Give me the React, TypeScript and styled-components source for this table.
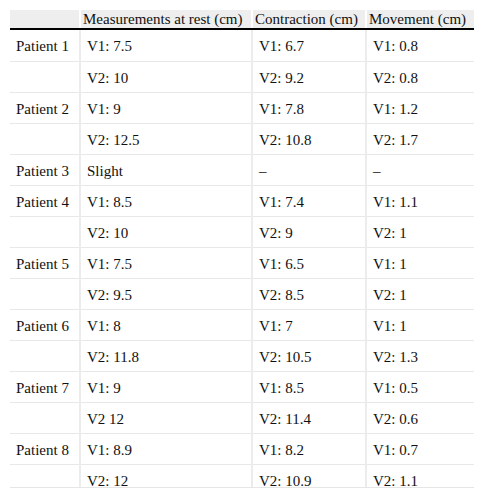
import { createGlobalStyle, styled } from 'styled-components';

type Row = [string, string, string, string];

const rows: Row[] = [
  ['Patient 1', 'V1: 7.5', 'V1: 6.7', 'V1: 0.8'],
  ['', 'V2: 10', 'V2: 9.2', 'V2: 0.8'],
  ['Patient 2', 'V1: 9', 'V1: 7.8', 'V1: 1.2'],
  ['', 'V2: 12.5', 'V2: 10.8', 'V2: 1.7'],
  ['Patient 3', 'Slight', '–', '–'],
  ['Patient 4', 'V1: 8.5', 'V1: 7.4', 'V1: 1.1'],
  ['', 'V2: 10', 'V2: 9', 'V2: 1'],
  ['Patient 5', 'V1: 7.5', 'V1: 6.5', 'V1: 1'],
  ['', 'V2: 9.5', 'V2: 8.5', 'V2: 1'],
  ['Patient 6', 'V1: 8', 'V1: 7', 'V1: 1'],
  ['', 'V2: 11.8', 'V2: 10.5', 'V2: 1.3'],
  ['Patient 7', 'V1: 9', 'V1: 8.5', 'V1: 0.5'],
  ['', 'V2 12', 'V2: 11.4', 'V2: 0.6'],
  ['Patient 8', 'V1: 8.9', 'V1: 8.2', 'V1: 0.7'],
  ['', 'V2: 12', 'V2: 10.9', 'V2: 1.1'],
];

const headers = ['', 'Measurements at rest (cm)', 'Contraction (cm)', 'Movement (cm)'];
const widths = [70, 172, 114, 108];

const GlobalStyle = createGlobalStyle`
  html, body {
    margin: 0;
    padding: 0;
    background: #ffffff;
  }
  body {
    padding: 10px 11px 0 10px;
    font-family: "Liberation Serif", "Times New Roman", serif;
    color: #111;
  }
`;

const Frame = styled.div`
  width: 464px;
  height: 477px;
  overflow: hidden;
  border-bottom: 1px solid #e6e6e6;
`;

const Table = styled.table`
  width: 464px;
  table-layout: fixed;
  border-collapse: collapse;
  font-family: "Liberation Serif", "Times New Roman", serif;
  font-size: 15px;
  line-height: 17px;
`;

const HeadCell = styled.th`
  background: #eeeeee;
  text-align: left;
  font-weight: normal;
  padding: 1px 2px 0 2px;
  height: 17px;
  border-bottom: 2px solid #000;
  border-left: 2px solid #ffffff;
  white-space: nowrap;

  &:first-child {
    border-left: none;
  }
`;

const Cell = styled.td<{ $first?: boolean }>`
  height: 31px;
  padding: 3px 6px 0 6px;
  box-sizing: border-box;
  vertical-align: middle;
  border-top: 1px solid #e8e8e8;
  border-left: ${(p) => (p.$first ? 'none' : '2px solid #ececec')};
  white-space: nowrap;
`;

const BodyRow = styled.tr`
  &:first-child td {
    border-top: none;
    height: 32px;
  }
`;

export default function App() {
  return (
    <>
      <GlobalStyle />
      <Frame>
        <Table>
          <colgroup>
            {widths.map((w, i) => (
              <col key={i} style={{ width: w }} />
            ))}
          </colgroup>
          <thead>
            <tr>
              {headers.map((h, i) => (
                <HeadCell key={i}>{h}</HeadCell>
              ))}
            </tr>
          </thead>
          <tbody>
            {rows.map((r, i) => (
              <BodyRow key={i}>
                {r.map((c, j) => (
                  <Cell key={j} $first={j === 0}>
                    {c}
                  </Cell>
                ))}
              </BodyRow>
            ))}
          </tbody>
        </Table>
      </Frame>
    </>
  );
}
